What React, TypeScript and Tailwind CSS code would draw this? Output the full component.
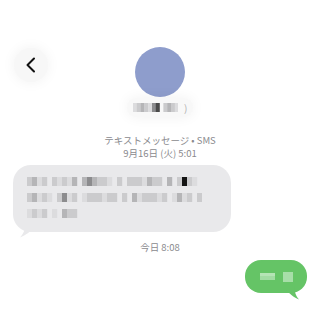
import React from 'react';

// mosaic shades for the blurred text
const SHADES: Record<string, string> = {
  '1': '#dcdcde',
  '2': '#cbcbcd',
  '3': '#b5b5b7',
  '4': '#8c8c8e',
  '5': '#4a4a4a',
  '6': '#141414',
};

const BUBBLE_ROWS = [
  '2312 21213 343221 2 2221322 3 2621',
  '23121 2412 1222122 2 3122212 1312 2',
  '1212 1 322',
];

const PILL_ROW = '1232145 2321';

function Mosaic({ rows, cell = 5, rowH = 9, gap = 7 }: { rows: string[]; cell?: number; rowH?: number; gap?: number }) {
  const width = Math.max(...rows.map(r => r.length)) * cell;
  const height = rows.length * rowH + (rows.length - 1) * gap;
  return (
    <svg width={width} height={height} viewBox={`0 0 ${width} ${height}`} className="block">
      {rows.map((row, ri) =>
        row.split('').map((ch, ci) =>
          SHADES[ch] ? (
            <rect
              key={`${ri}-${ci}`}
              x={ci * cell}
              y={ri * (rowH + gap)}
              width={cell + 0.2}
              height={rowH}
              fill={SHADES[ch]}
            />
          ) : null
        )
      )}
    </svg>
  );
}

export default function App() {
  return (
    <div
      className="w-[320px] h-[320px] overflow-hidden bg-white"
      style={{ fontFamily: '"Noto Sans CJK JP", "Noto Sans", sans-serif' }}
    >
      {/* header */}
      <div className="grid grid-cols-[48px_1fr_48px] pt-[47px]">
        <div className="pl-[14px] pt-[1px]">
          <div className="w-[34px] h-[34px] rounded-full bg-[#f7f7f7] shadow-[0_0_14px_rgba(0,0,0,0.06)] flex items-center justify-center">
            <svg width="12" height="16" viewBox="0 0 12 16">
              <path d="M9 1.5 L2.5 8 L9 14.5" fill="none" stroke="#111" strokeWidth="2" strokeLinecap="round" strokeLinejoin="round" />
            </svg>
          </div>
        </div>
        <div className="flex flex-col items-center">
          <div className="w-[50px] h-[50px] rounded-full bg-[#8e9dcc]" />
          <div className="mt-[1px] h-[19px] px-[6px] rounded-full bg-[#f8f8f8] shadow-[0_0_14px_rgba(0,0,0,0.06)] flex items-center gap-[6px]">
            <Mosaic rows={[PILL_ROW]} cell={3.8} rowH={9} />
            <span className="text-[10px] leading-none text-[#b0b0b2]">)</span>
          </div>
        </div>
        <div />
      </div>

      <div className="mt-[17px] flex flex-col items-center text-[9.5px] leading-[13px] text-[#8a8a8e]">
        <span>テキストメッセージ • SMS</span>
        <span>9月16日 (火) 5:01</span>
      </div>

      {/* incoming */}
      <div className="mt-[5px] pl-[13px]">
        <div className="relative w-[218px] h-[67px] rounded-[18px] bg-[#e9e9eb] pl-[14px] pt-[12px]">
          <Mosaic rows={BUBBLE_ROWS} />
          <svg className="absolute left-[3px] bottom-[-6px]" width="20" height="18" viewBox="0 0 20 18">
            <path d="M18 0 L18 8 C14 12 10 15 4 17.5 C8 13 10 8 10 0 Z" fill="#e9e9eb" />
          </svg>
        </div>
      </div>

      <div className="mt-[9px] flex justify-center text-[9.5px] leading-[12px] text-[#8a8a8e]">
        <span>今日 8:08</span>
      </div>

      {/* outgoing */}
      <div className="mt-[7px] flex justify-end pr-[13px]">
        <div className="relative w-[62px] h-[33px] rounded-[16px] bg-[#65c466] flex items-center justify-center gap-[8px]">
          <div className="flex flex-col">
            <div className="w-[15px] h-[3px] bg-[#b5e4b5]" />
            <div className="w-[15px] h-[4px] bg-[#a2dca3]" />
          </div>
          <div className="w-[10px] h-[10px] bg-[#a7dea8]" />
          <svg className="absolute right-[3px] bottom-[-7px]" width="18" height="18" viewBox="0 0 18 18">
            <path d="M0 0 L0 8 C4 12 7 15 13 17.5 C9 13 8 8 8 0 Z" fill="#65c466" />
          </svg>
        </div>
      </div>
    </div>
  );
}
